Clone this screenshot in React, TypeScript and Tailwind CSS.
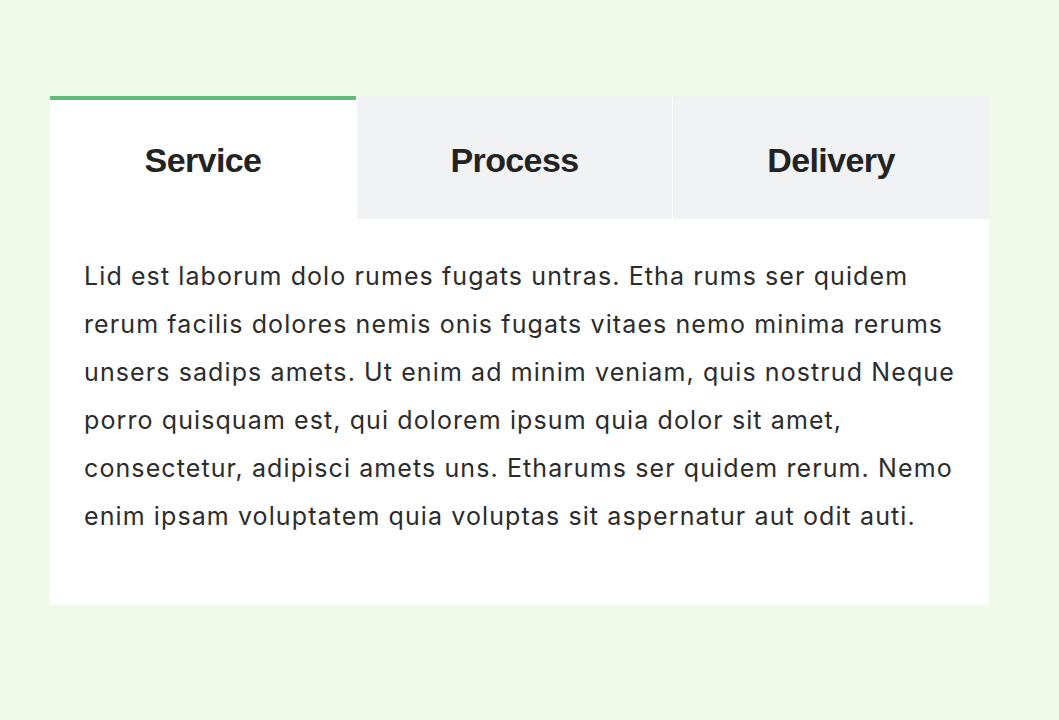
import { useState } from "react";

const tabs = ["Service", "Process", "Delivery"];

const App = () => {
  const [active, setActive] = useState(0);

  return (
    <div className="min-h-screen w-full bg-[#effbe7] pt-24 px-[50px]" style={{ fontFamily: "Inter, 'Noto Sans', sans-serif" }}>
      <div className="w-[939px] bg-white">
        <div className="grid grid-cols-[306px_316px_317px] gap-0">
          {tabs.map((t, i) => (
            <button
              key={t}
              onClick={() => setActive(i)}
              className={
                i === active
                  ? "h-[123px] bg-white border-t-4 border-[#5fbd7b] pt-[2px] text-[34px] font-bold tracking-[-0.6px] text-[#232323]"
                  : "h-[123px] bg-[#f1f2f4] border-l border-t-4 border-l-white border-t-[#f1f2f4] pt-[2px] text-[34px] font-bold tracking-[-0.6px] text-[#232323]"
              }
              style={{ fontFamily: "'Liberation Sans', Arial, sans-serif" }}
            >
              {t}
            </button>
          ))}
        </div>
        <div className="pl-[34px] pr-[28px] pt-[33px] pb-[65px]">
          <p className="text-[25px] leading-[48px] tracking-[1.1px] text-[#2c2c2c]">
            Lid est laborum dolo rumes fugats untras. Etha rums ser quidem rerum facilis dolores nemis onis fugats vitaes nemo minima rerums unsers sadips amets. Ut enim ad minim veniam, quis nostrud Neque porro quisquam est, qui dolorem ipsum quia dolor sit amet, consectetur, adipisci amets uns. Etharums ser quidem rerum. Nemo enim ipsam voluptatem quia voluptas sit aspernatur aut odit auti.
          </p>
        </div>
      </div>
    </div>
  );
};

export default App;
